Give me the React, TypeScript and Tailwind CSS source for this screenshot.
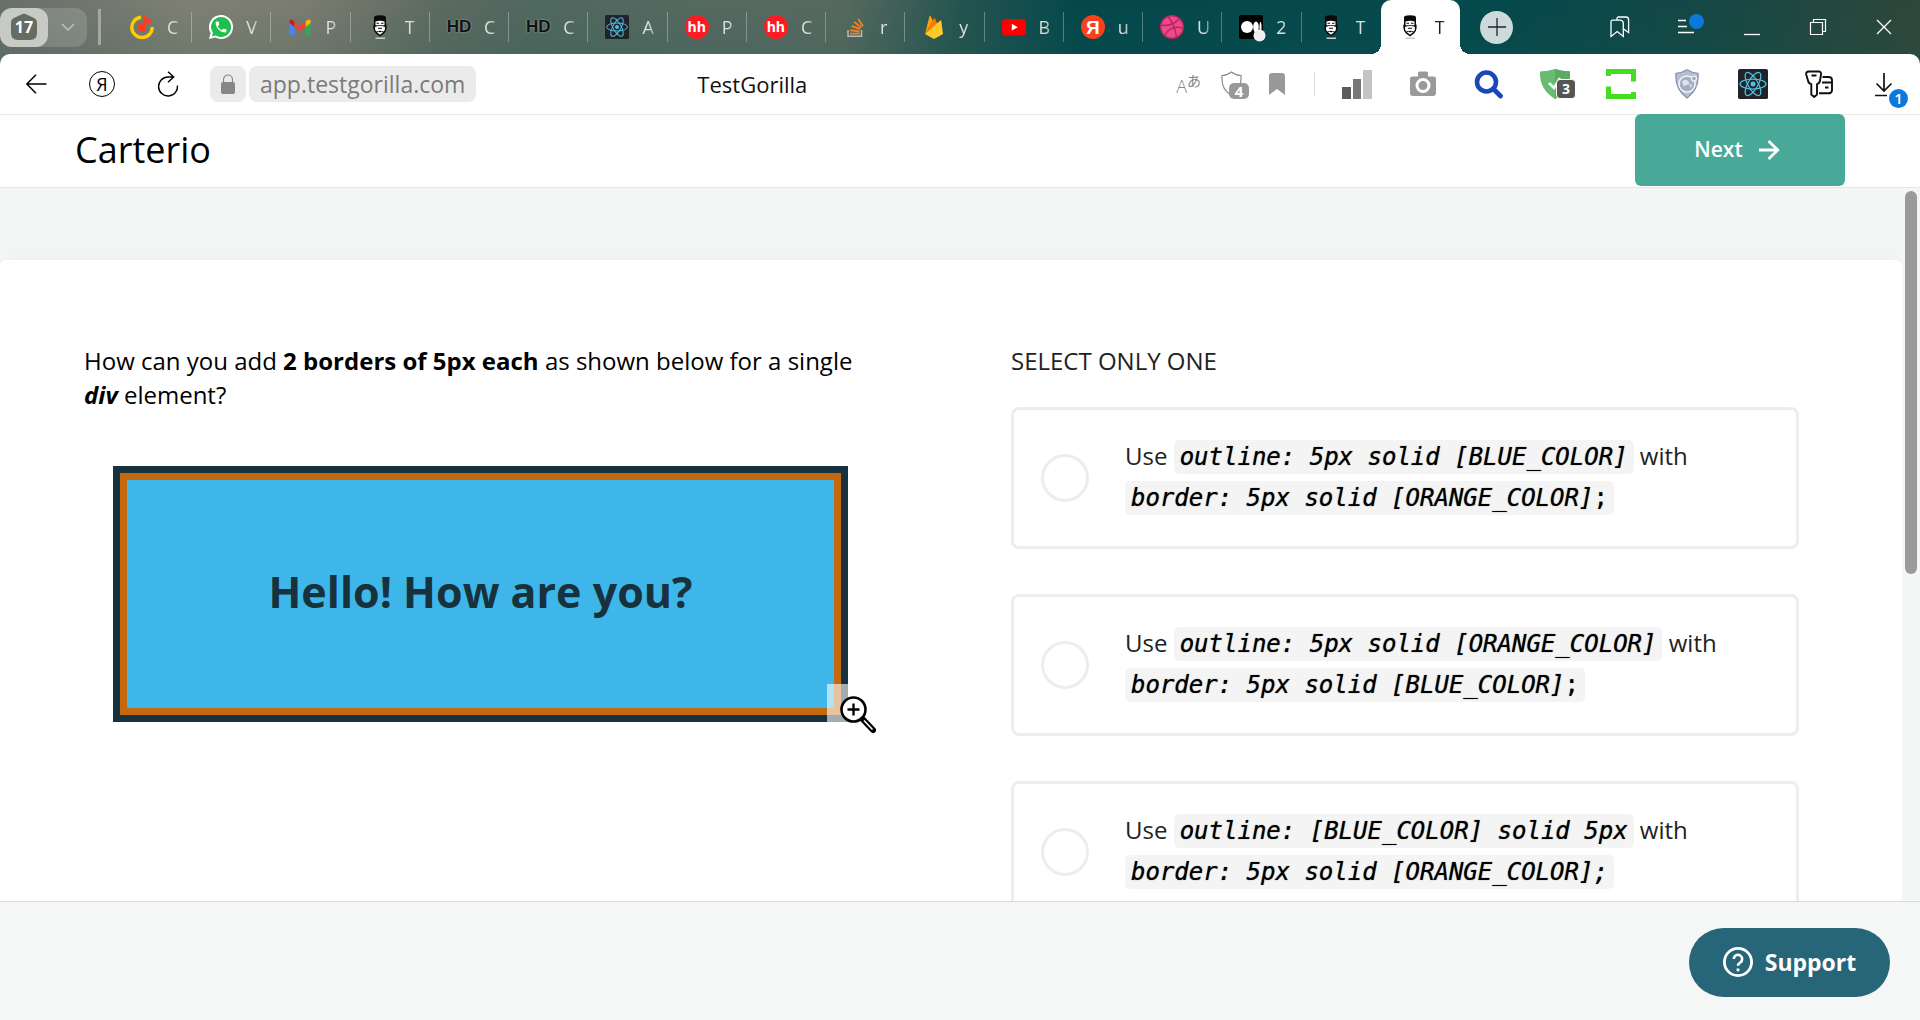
import React from "react";

const UI = "font-['Open_Sans','Noto_Sans',sans-serif]";

function ReactLogo({ size }: { size: number }) {
  return (
    <svg width={size} height={size} viewBox="0 0 24 24">
      <rect width="24" height="24" rx="1.5" fill="#20232a" />
      <g fill="none" stroke="#53c1de" strokeWidth="1">
        <ellipse cx="12" cy="12" rx="10.4" ry="4" />
        <ellipse cx="12" cy="12" rx="10.4" ry="4" transform="rotate(60 12 12)" />
        <ellipse cx="12" cy="12" rx="10.4" ry="4" transform="rotate(120 12 12)" />
      </g>
      <circle cx="12" cy="12" r="2" fill="#53c1de" />
    </svg>
  );
}

function MusicIcon() {
  return (
    <svg width="24" height="24" viewBox="0 0 24 24">
      <path d="M11 2.200A10.200 10.200 0 1 0 22.200 12" fill="none" stroke="#ffcc00" strokeWidth="3.400" />
      <circle cx="12" cy="12.200" r="4.300" fill="#ff3a20" />
      <path d="M13.800 0.300 L21 5.600 L20.500 8.800 L16.300 7.200 L16.300 12.500 L13.800 12.500 Z" fill="#ff3a20" />
    </svg>
  );
}

function WhatsAppIcon() {
  return (
    <svg width="24" height="24" viewBox="0 0 24 24">
      <path d="M12 0a12 12 0 1 1-5.6 22.6L0 24l1.6-6A12 12 0 0 1 12 0z" fill="#fff" />
      <path d="M12 2a10 10 0 1 1-5.2 18.5L2.9 21.4l1-3.7A10 10 0 0 1 12 2z" fill="#1fbf4f" />
      <path
        transform="translate(4.8 4.8) scale(0.6)"
        d="M6.62 10.79c1.44 2.83 3.76 5.14 6.59 6.59l2.2-2.2c.27-.27.67-.36 1.02-.24 1.12.37 2.33.57 3.57.57.55 0 1 .45 1 1V20c0 .55-.45 1-1 1-9.39 0-17-7.61-17-17 0-.55.45-1 1-1h3.5c.55 0 1 .45 1 1 0 1.25.2 2.45.57 3.57.11.35.03.74-.25 1.02l-2.2 2.2z"
        fill="#fff"
      />
    </svg>
  );
}

function GmailIcon() {
  return (
    <svg width="24" height="24" viewBox="0 0 24 24">
      <path d="M1.5 8v10.5q0 1.5 1.5 1.5h3.5V11z" fill="#4285f4" />
      <path d="M17.5 11v9H21q1.5 0 1.5-1.500V8z" fill="#34a853" />
      <path d="M17.500 6.500 L19.600 4.900 Q21 4 22.200 5 Q22.800 5.600 22.500 8 L17.500 12z" fill="#fbbc04" />
      <path d="M1.500 8 Q1 5.500 2 4.900 Q3.200 4 4.600 5 L6.500 6.500 V12z" fill="#c5221f" />
      <path d="M6.500 6.500 L12 10.700 L17.500 6.500 V12 L12 16.200 L6.500 12z" fill="#ea4335" />
    </svg>
  );
}

function GorillaIcon() {
  return (
    <svg width="24" height="24" viewBox="0 0 24 24">
      <path d="M6 2.500 Q6 .3 12 .3 Q18 .3 18 2.500 V9 Q19 9.500 18.600 13 Q18.200 17 16 18.500 L12 21.500 L8 18.500 Q5.800 17 5.400 13 Q5 9.500 6 9z" fill="#0a0a0a" />
      <path d="M7.500 6.500 Q12 5 16.500 6.500 V10.200 H7.500z" fill="#fff" />
      <path d="M7 12 Q9.500 10.600 12 11 Q14.500 10.600 17 12 Q17.200 15.500 15.800 16.500 Q12 14.800 8.200 16.500 Q6.800 15.500 7 12z" fill="#fff" />
      <path d="M8.500 8.200h2.600M13 8.200h2.500M10 13.300h4" stroke="#0a0a0a" strokeWidth="1.100" />
      <path d="M9 17.200 L10.300 16.600 L12 17.500 L13.700 16.600 L15 17.200 L12 19.800z" fill="#fff" />
      <rect x="7.500" y="22.500" width="9.500" height="1.500" fill="#c9cbc9" />
    </svg>
  );
}

function HdIcon() {
  return (
    <span className="font-['Liberation_Sans',sans-serif] text-[17px] leading-6 font-bold text-[#111] [text-shadow:0_0_2px_#b4b8b4]">HD</span>
  );
}

function HhIcon() {
  return (
    <span className="flex size-6 items-center justify-center rounded-full bg-[#ff1a22] text-[14px] leading-none font-bold text-white">hh</span>
  );
}

function StackIcon() {
  return (
    <svg width="24" height="24" viewBox="0 0 24 24">
      <path d="M5 15v6.200h13.500V15" fill="none" stroke="#b5bbc0" strokeWidth="1.500" />
      <path d="M7 18.600h9.500M7.200 15.200l9.300 1.300M8.500 11l8.600 3.200M11.200 7l7.200 5.600M15.200 4l4.800 7.200" stroke="#f08024" strokeWidth="1.900" />
    </svg>
  );
}

function FirebaseIcon() {
  return (
    <svg width="24" height="24" viewBox="0 0 24 24">
      <path d="M3 19 L7.500 1 Q8 .2 8.600 1 L11 6z" fill="#ffa000" />
      <path d="M3 19 L12 3.500 Q12.500 2.800 13 3.500 L15.500 9z" fill="#f57c00" />
      <path d="M3 19 L18.300 5.500 Q19 5 19.300 6 L21 19 L13 23.600 Q12 24 11 23.600z" fill="#ffca28" />
    </svg>
  );
}

function YoutubeIcon() {
  return (
    <svg width="24" height="24" viewBox="0 0 24 24">
      <rect y="4" width="24" height="16.500" rx="3.500" fill="#f00" />
      <path d="M9.800 8.800 L15.800 12.200 L9.800 15.600z" fill="#fff" />
    </svg>
  );
}

function YandexIcon() {
  return (
    <span className="flex size-6 items-center justify-center rounded-full bg-[#fc3f1d] font-['Liberation_Sans',sans-serif] text-[19px] leading-none font-bold text-white">Я</span>
  );
}

function DribbbleIcon() {
  return (
    <svg width="24" height="24" viewBox="0 0 24 24">
      <circle cx="12" cy="12" r="11.300" fill="#ea4c89" stroke="#c32361" strokeWidth="1.400" />
      <g fill="none" stroke="#c32361" strokeWidth="1.500">
        <path d="M8 1.500Q15 10 16.500 22.300" />
        <path d="M.8 10.500Q14 11 19.500 3.500" />
        <path d="M4.500 20.500Q10 10 23.300 13" />
      </g>
    </svg>
  );
}

function MediumIcon() {
  return (
    <svg width="28" height="28" viewBox="0 0 28 28" className="-mr-1 mt-1 shrink-0">
      <rect width="24" height="24" rx="2" fill="#000" />
      <circle cx="8" cy="12" r="6" fill="#fff" />
      <ellipse cx="17" cy="12" rx="2.800" ry="5.600" fill="#fff" />
      <ellipse cx="21.500" cy="12" rx="1" ry="5" fill="#fff" />
      <circle cx="20.500" cy="20.500" r="6" fill="#efefef" />
    </svg>
  );
}

const tabs: { icon: React.ReactNode; text: string }[] = [
  { icon: <MusicIcon />, text: "C" },
  { icon: <WhatsAppIcon />, text: "V" },
  { icon: <GmailIcon />, text: "P" },
  { icon: <GorillaIcon />, text: "T" },
  { icon: <HdIcon />, text: "C" },
  { icon: <HdIcon />, text: "C" },
  { icon: <ReactLogo size={24} />, text: "A" },
  { icon: <HhIcon />, text: "P" },
  { icon: <HhIcon />, text: "C" },
  { icon: <StackIcon />, text: "r" },
  { icon: <FirebaseIcon />, text: "y" },
  { icon: <YoutubeIcon />, text: "В" },
  { icon: <YandexIcon />, text: "u" },
  { icon: <DribbbleIcon />, text: "U" },
  { icon: <MediumIcon />, text: "2" },
  { icon: <GorillaIcon />, text: "T" },
  { icon: <GorillaIcon />, text: "T" },
];

function TabStrip() {
  return (
    <div className="flex h-[54px]">
      <div className="flex w-[113px] shrink-0 items-center">
        <div className="flex h-[39px] items-center rounded-xl bg-white/15">
          <button aria-label="17 tabs" className="flex h-[39px] w-12 items-center justify-center rounded-xl bg-[#c7cac5]">
            <span className="grid place-items-center">
              <svg width="26" height="28" viewBox="0 0 26 28" className="col-start-1 row-start-1">
                <path d="M0 10Q0 6 3.500 4.800L11.500 1Q13 .3 14.500 1L22.500 4.800Q26 6 26 10V20Q26 27 19 27H7Q0 27 0 20z" fill="#666c61" />
              </svg>
              <span className="col-start-1 row-start-1 text-[16px] leading-none font-bold text-white">17</span>
            </span>
          </button>
          <button aria-label="Tab groups" className="flex h-[39px] w-[39px] items-center justify-center">
            <svg width="14" height="9" viewBox="0 0 14 9"><path d="M1 1l6 6 6-6" fill="none" stroke="#bfc3bd" strokeWidth="1.500" /></svg>
          </button>
        </div>
        <div className="ml-[11px] h-9 w-[3px] bg-[#a5a79c]" />
      </div>
      <div role="tablist" className="flex min-w-0 flex-1">
        {tabs.map((t, i) => {
          const active = i === tabs.length - 1;
          return (
            <button
              key={i}
              role="tab"
              aria-selected={active}
              className={
                active
                  ? "relative flex min-w-0 flex-1 items-center rounded-t-[10px] bg-white pl-4 text-[#222]"
                  : "relative flex min-w-0 flex-1 items-center pl-4 text-[#dce0dc]"
              }
            >
              <span className="flex size-[26px] shrink-0 items-center justify-center">{t.icon}</span>
              <span className="ml-3 w-[14px] text-left text-[18px] leading-6 [mask-image:linear-gradient(to_right,#000_50%,rgba(0,0,0,.2))]">{t.text}</span>
              {!active && i !== tabs.length - 2 && <span className="absolute top-3 right-0 h-[30px] w-px bg-white/30" />}
              {active && (
                <>
                  <span className="absolute bottom-0 -left-[10px] size-[10px] bg-[radial-gradient(circle_at_0_0,transparent_10px,#fff_10px)]" />
                  <span className="absolute -right-[10px] bottom-0 size-[10px] bg-[radial-gradient(circle_at_100%_0,transparent_10px,#fff_10px)]" />
                </>
              )}
            </button>
          );
        })}
      </div>
      <div className="flex w-[460px] shrink-0 items-center justify-between pr-[3px] pl-5">
        <button aria-label="New tab" className="flex size-[33px] items-center justify-center rounded-full bg-[#cddada]">
          <svg width="18" height="18" viewBox="0 0 18 18"><path d="M9 0v18M0 9h18" stroke="#223" strokeWidth="1.300" /></svg>
        </button>
        <div className="flex">
          {[
            ["Collections", <svg key="a" width="20" height="22" viewBox="0 0 20 22" fill="none" stroke="#fff" strokeWidth="1.300"><path d="M1 5.800Q1 4.200 2.600 4.200H10Q11.500 4.200 12.500 5.200Q13.300 6 13.300 7V20.500L7.200 15.500L1 20.500z" /><path d="M7 4V2.500Q7 1 8.500 1H16Q18.600 1 18.600 4V16.500L13.500 13" /></svg>],
            ["Menu", <svg key="b" width="38" height="26" viewBox="0 0 38 26" fill="none"><path d="M11 6.500h8M11 12.500h9M11 18.500h16" stroke="#fff" strokeWidth="1.300" /><circle cx="29.500" cy="7.500" r="7.500" fill="#0b78dc" /></svg>],
            ["Minimize", <svg key="c" width="16" height="20" viewBox="0 0 16 20"><path d="M0 17.500h16" stroke="#fff" strokeWidth="1.300" /></svg>],
            ["Restore", <svg key="d" width="18" height="18" viewBox="0 0 18 18" fill="none" stroke="#fff" strokeWidth="1.200"><path d="M1.500 4.500h12v12h-12zM4.500 4.500v-3h12v12h-3" /></svg>],
            ["Close", <svg key="e" width="16" height="16" viewBox="0 0 16 16"><path d="M1 1l14 14M15 1L1 15" stroke="#fff" strokeWidth="1.200" /></svg>],
          ].map(([label, icon]) => (
            <button key={label as string} aria-label={label as string} className="flex h-[54px] w-[66px] items-center justify-center">{icon}</button>
          ))}
        </div>
      </div>
    </div>
  );
}

const extensions: [string, React.ReactNode][] = [
  ["Signal", <svg key="1" width="30" height="30" viewBox="0 0 30 30"><rect y="18" width="9" height="12" fill="#5c5c5c" /><rect x="11" y="10" width="8" height="20" fill="#777" /><rect x="21" y="1" width="9" height="29" fill="#c4c4c4" /></svg>],
  ["Screenshot", <svg key="2" width="28" height="28" viewBox="0 0 28 28"><path d="M1 9Q1 6.500 3.500 6.500H9V3Q9 1.500 10.500 1.500H17.500Q19 1.500 19 3V6.500H24.500Q27 6.500 27 9V23Q27 26 24 26H4Q1 26 1 23z" fill="#9a9a9a" /><circle cx="14" cy="15.500" r="6" fill="none" stroke="#fff" strokeWidth="3" /></svg>],
  ["Search", <svg key="3" width="30" height="30" viewBox="0 0 30 30" fill="none"><circle cx="12.500" cy="13" r="9.500" stroke="#1b48b8" strokeWidth="4.600" /><path d="M19.500 20l7 7" stroke="#1b48b8" strokeWidth="4.800" strokeLinecap="round" /></svg>],
  ["Adblock", (
    <span key="4" className="relative">
      <svg width="30" height="30" viewBox="0 0 30 30"><path d="M0 2.500Q8 2 15 0Q22 2 30 2.500Q31 20 15 30Q-1 20 0 2.500z" fill="#68bc71" /><path d="M15 0Q22 2 30 2.500Q31 20 15 30z" fill="#5aa965" /><path d="M9 14l5 5L20 9" stroke="#fff" strokeWidth="2.500" fill="none" /></svg>
      <span className="absolute -right-[6px] bottom-0 flex h-5 w-5 items-center justify-center rounded-[4px] border border-white bg-[#555] text-[14px] leading-none font-bold text-white">3</span>
    </span>
  )],
  ["Capture", <svg key="5" width="30" height="30" viewBox="0 0 30 30" fill="none" stroke="#45dd20" strokeWidth="5"><path d="M2.500 7V2.500H27.500V12.500" /><path d="M2.500 17.500V27.500H27.500V23" /></svg>],
  ["Privacy shield", <svg key="6" width="24" height="30" viewBox="0 0 24 30"><path d="M12 .8Q17 4 23 4.300Q24.500 20 12 29Q-.5 20 1 4.300Q7 4 12 .8z" fill="#b6bfd2" stroke="#8893ad" strokeWidth="1.300" /><circle cx="12" cy="15" r="8" fill="#a4afc4" stroke="#f2f4f8" strokeWidth="1.500" /><path d="M7 13q3-4 6-1t-1 4-3 2zM14 16l3-1-1 4z" fill="#dde2ec" /><circle cx="19" cy="9.500" r="2.500" fill="#a4afc4" stroke="#f2f4f8" strokeWidth="1.200" /></svg>],
  ["React tools", <ReactLogo key="7" size={30} />],
  ["Passwords", <svg key="8" width="28" height="28" viewBox="0 0 28 28" fill="none" stroke="#111" strokeWidth="1.900" strokeLinejoin="round"><path d="M4 1.500H13.500Q16.500 1.500 16 4.500L15 10.500Q14.500 13.500 12 14.200V24.500L9.200 27L6.300 24.500V14.200Q3.500 13.500 3 10.500L1.200 4.500Q.8 1.500 4 1.500zM6.500 5.500h5" /><path d="M17.500 7H23.500Q27 7 27 10V20Q27 23.200 24 23.200H14M17 12.500h10M20 17.500h3.500" /></svg>],
  ["Downloads", (
    <span key="9" className="relative">
      <svg width="20" height="26" viewBox="0 0 20 26" fill="none" stroke="#111" strokeWidth="1.700"><path d="M9 2v18M1.500 12.500L9 20l7.500-7.500M0 24.500h12" /></svg>
      <span className="absolute top-[18px] left-[14px] flex size-[19px] items-center justify-center rounded-full bg-[#0b78dc] text-[15px] leading-none font-semibold text-white">1</span>
    </span>
  )],
];

function Toolbar() {
  return (
    <div className="flex h-[61px] items-center rounded-t-[10px] border-b border-[#e9e9e9] bg-white">
      <button aria-label="Back" className="ml-[26px] w-[21px]">
        <svg width="21" height="20" viewBox="0 0 21 20" fill="none" stroke="#000" strokeWidth="1.500"><path d="M20.500 10H1M10 .8L.9 10l9.100 9.200" /></svg>
      </button>
      <button aria-label="Yandex" className="ml-[42px] flex size-[26px] items-center justify-center rounded-full border border-black text-[18px] leading-none">Я</button>
      <button aria-label="Reload" className="ml-[42px]">
        <svg width="22" height="26" viewBox="0 0 22 26" fill="none" stroke="#000" strokeWidth="1.400"><path d="M16.500 6H11A9.500 9.500 0 1 0 20.500 14.500M11 .8L16.700 6L11 11.200" /></svg>
      </button>
      <button aria-label="Site security" className="ml-[31px] flex h-9 w-9 items-center justify-center rounded-lg bg-[#ebebeb]">
        <svg width="14" height="20" viewBox="0 0 14 20"><rect y="8" width="14" height="12" rx="2" fill="#878787" /><path d="M2.500 9V5.500a4.500 4.500 0 0 1 9 0V9" fill="none" stroke="#878787" strokeWidth="1.200" /></svg>
      </button>
      <button className="ml-[3px] h-9 rounded-lg bg-[#ebebeb] px-[11px] text-[23px] leading-9 text-[#7b7b7b]">app.testgorilla.com</button>
      <div className="min-w-0 flex-1 pl-[221px] text-[22px] leading-8 text-[#111]">TestGorilla</div>
      <div className="flex items-center">
        <button aria-label="Translate" className="flex items-start text-[#858585]">
          <span className="pt-1 text-[18px] leading-5 font-light">A</span>
          <span className="font-['Noto_Sans_CJK_JP',sans-serif] text-[14px] leading-4">あ</span>
        </button>
        <button aria-label="Protection" className="relative ml-[20px] w-[22px]">
          <svg width="21" height="26" viewBox="0 0 21 26" fill="none" stroke="#8b8b8b" strokeWidth="1.200"><path d="M10.500 1Q15 4.500 20 4.500Q21 19 10.500 24Q0 19 1 4.500Q6 4.500 10.500 1z" /></svg>
          <span className="absolute top-3 left-2 flex h-4 w-5 items-center justify-center rounded-[5px] bg-[#999] text-[15px] leading-none font-bold text-white">4</span>
        </button>
        <button aria-label="Bookmark" className="ml-[26px]">
          <svg width="16" height="22" viewBox="0 0 16 22"><path d="M0 3Q0 0 3 0H13Q16 0 16 3V22L8 16L0 22z" fill="#999" /></svg>
        </button>
        <div className="ml-[29px] h-6 w-px bg-[#ddd]" />
      </div>
      <div className="mr-[2px] ml-[9px] flex">
        {extensions.map(([label, icon]) => (
          <button key={label} aria-label={label} className="flex h-[60px] w-[66px] items-center justify-center">{icon}</button>
        ))}
      </div>
    </div>
  );
}

function Code({ children }: { children: React.ReactNode }) {
  return (
    <code className="rounded-[5px] bg-[#f4f4f4] px-[6px] py-[3px] font-['DejaVu_Sans_Mono',monospace] text-2xl leading-none whitespace-nowrap text-black italic [text-shadow:0_0_1px_rgba(0,0,0,0.7)]">{children}</code>
  );
}

const options = [
  { first: "outline: 5px solid [BLUE_COLOR]", second: "border: 5px solid [ORANGE_COLOR]", plainEnd: true },
  { first: "outline: 5px solid [ORANGE_COLOR]", second: "border: 5px solid [BLUE_COLOR]", plainEnd: true },
  { first: "outline: [BLUE_COLOR] solid 5px", second: "border: 5px solid [ORANGE_COLOR];", plainEnd: false },
];

function Question() {
  return (
    <section className="w-[770px] shrink-0">
      <p className="text-2xl leading-[34px] text-black">
        How can you add <strong>2 borders of 5px each</strong> as shown below for a single <strong><em>div</em></strong> element?
      </p>
      <div className="relative mt-[54px] ml-[29px] w-[735px] border-7 border-[#17323d] bg-[#3fb6e9]">
        <div className="flex h-[242px] items-center justify-center border-7 border-[#c4690f] pb-[6px]">
          <span className="text-[43px] leading-none font-bold text-[#17323d]">Hello! How are you?</span>
        </div>
        <button aria-label="Zoom image" className="absolute -right-[7px] -bottom-[7px] h-[38px] w-[21px] bg-white/60">
          <svg width="36" height="38" viewBox="0 0 36 38" fill="none" className="absolute top-3 left-[13px] max-w-none">
            <circle cx="13.500" cy="13.500" r="12" fill="#fff" stroke="#000" strokeWidth="2.600" />
            <path d="M13.500 7.500v12M7.500 13.500h12" stroke="#000" strokeWidth="2.300" />
            <path d="M23 23.500L33 34" stroke="#000" strokeWidth="6" strokeLinecap="round" />
            <path d="M24 24.500L32.500 33.500" stroke="#fff" strokeWidth="1.600" />
          </svg>
        </button>
      </div>
    </section>
  );
}

function Answers() {
  return (
    <fieldset className="w-[788px] shrink-0">
      <legend className="text-2xl leading-[34px] text-[#222]">SELECT ONLY ONE</legend>
      <div className="mt-[29px] flex flex-col gap-[45px]">
        {options.map((o) => (
          <label key={o.first} className="flex min-h-[142px] items-center rounded-lg border-3 border-[#ededed] px-[27px]">
            <input type="radio" name="answer" className="size-12 shrink-0 appearance-none rounded-full border-3 border-[#ededed] bg-white checked:bg-[#48a999]" />
            <span className="ml-9 pb-1 text-2xl leading-[41px] text-[#222]">
              Use <Code>{o.first}</Code> with{" "}
              <Code>
                {o.second}
                {o.plainEnd && <span className="not-italic">;</span>}
              </Code>
            </span>
          </label>
        ))}
      </div>
    </fieldset>
  );
}

export default function App() {
  return (
    <div className={`flex h-screen flex-col overflow-hidden bg-white ${UI}`}>
      <div className="shrink-0 bg-[linear-gradient(to_bottom,rgba(20,80,75,0)_0%,rgba(25,85,75,.15)_54px,transparent_100px),linear-gradient(to_right,#68706a_0%,#7f8073_10%,#7b7c70_16%,#5d6a60_23%,#506860_28%,#576a61_40%,#56695f_44%,#255450_50%,#04484c_56%,#04494c_78%,#174744_90%,#30473a_100%)]">
        <TabStrip />
        <Toolbar />
      </div>
      <header className="flex h-[73px] shrink-0 items-start justify-between border-b border-[#e6e8e8] bg-white pr-[75px] pl-[75px]">
        <h1 className="text-4xl leading-[70px] text-black">Carterio</h1>
        <button className="-mt-px flex h-[72px] w-[210px] items-center justify-center gap-4 rounded-md bg-[#48a999] pr-[6px] text-[21px] font-semibold text-white">
          Next
          <svg width="21" height="20" viewBox="0 0 21 20" fill="none" stroke="#fff" strokeWidth="2.800"><path d="M0 10h18.500M9.500 1l9.300 9-9.300 9" /></svg>
        </button>
      </header>
      <div className="flex min-h-0 flex-1 bg-[#f4f6f6]">
        <main className="min-w-0 flex-1 overflow-hidden pt-[72px]">
          <div className="flex justify-between rounded-t-md bg-white pt-[84px] pr-[103px] pb-20 pl-[84px] shadow-[0_0_24px_rgba(0,0,0,0.03)]">
            <Question />
            <Answers />
          </div>
        </main>
        <div className="w-[18px] shrink-0 pt-[3px] pl-[3px]">
          <div className="h-[383px] w-3 rounded-full bg-[#9a9a9a]" />
        </div>
      </div>
      <footer className="flex h-[119px] shrink-0 items-start justify-end border-t border-[#d8dcdc] bg-[#f5f7f6] pt-[26px] pr-[30px]">
        <button className="flex h-[69px] w-[201px] items-center justify-center gap-3 rounded-full bg-[#276678] pb-px text-[23px] font-bold text-white">
          <svg width="30" height="30" viewBox="0 0 30 30" fill="none" stroke="#fff"><circle cx="15" cy="15" r="13.600" strokeWidth="2.800" /><path d="M10.800 12a4.200 4.200 0 1 1 6.500 3.500Q15 17 15 18.800" strokeWidth="2.600" /><path d="M15 21.500v2.800" strokeWidth="2.800" /></svg>
          Support
        </button>
      </footer>
    </div>
  );
}
